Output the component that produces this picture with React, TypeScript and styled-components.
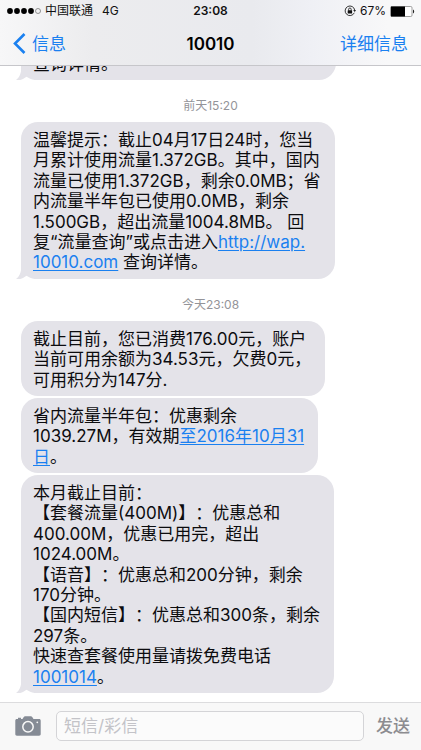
import React from "react";
import styled, { createGlobalStyle } from "styled-components";

const blue = "#1a80f0";
const bubbleGrey = "#e4e3e9";

const GlobalStyle = createGlobalStyle`
  * { box-sizing: border-box; }
  body {
    margin: 0;
    background: #fff;
    color: #0c0c0f;
    font-family: Inter, "Noto Sans CJK SC", sans-serif;
    text-spacing-trim: space-all;
  }
  button, input { font: inherit; }
`;

const Screen = styled.div`
  display: flex;
  flex-direction: column;
  height: 100vh;
  overflow: hidden;
`;

const TopBar = styled.header`
  flex: none;
  background: linear-gradient(90deg, #f7f7f8 0%, #ececee 22%, #e9eaee 60%, #eff0f5 74%, #f8f8f9 92%);
  border-bottom: 1px solid #c6c6ca;
`;

const StatusBar = styled.div`
  display: grid;
  grid-template-columns: 1fr auto 1fr;
  align-items: center;
  height: 22px;
  padding: 0 6px;
  font-size: 12px;
  line-height: 22px;
  color: #111;
`;

const StatusGroup = styled.div<{ $end?: boolean }>`
  display: flex;
  align-items: center;
  justify-content: ${(p) => (p.$end ? "flex-end" : "flex-start")};
  gap: ${(p) => (p.$end ? "4px" : "3px")};
`;

const Network = styled.span`
  margin-left: 6px;
`;

const Clock = styled.span`
  font-weight: 600;
  font-size: 12px;
`;

const NavBar = styled.nav`
  display: grid;
  grid-template-columns: 1fr auto 1fr;
  align-items: center;
  height: 43px;
  padding: 0 13px;
`;

const NavButton = styled.button<{ $end?: boolean }>`
  display: flex;
  align-items: center;
  gap: 6px;
  justify-self: ${(p) => (p.$end ? "end" : "start")};
  padding: 0;
  border: 0;
  background: none;
  color: ${blue};
  font-size: 17px;
  line-height: 24px;
`;

const Title = styled.h1`
  margin: 0;
  font-size: 17px;
  line-height: 24px;
  font-weight: 600;
  color: #000;
`;

const Thread = styled.main`
  flex: 1;
  min-height: 0;
  display: flex;
  flex-direction: column;
  justify-content: flex-end;
  align-items: flex-start;
  gap: 2px;
  padding: 0 21px 9px;
  overflow: hidden;
`;

const Stamp = styled.time`
  flex: none;
  align-self: center;
  padding: 14px 0 4px;
  font-size: 12px;
  line-height: 20px;
  color: #949499;
`;

const Bubble = styled.article<{ $tail?: boolean; $wide?: boolean }>`
  position: relative;
  flex: none;
  min-width: ${(p) => (p.$wide ? "83%" : "0")};
  max-width: 100%;
  padding: 8px 14px 6px 12px;
  border-radius: ${(p) => (p.$tail ? "17px 17px 17px 0" : "17px")};
  background: ${bubbleGrey};
  font-size: 17px;
  line-height: 1.2;
`;

const Line = styled.div`
  white-space: nowrap;
`;

const TailShape = styled.svg`
  position: absolute;
  left: -5px;
  bottom: 0;
`;

const TextLink = styled.a`
  color: ${blue};
  text-decoration: underline;
  text-decoration-thickness: 1px;
  text-underline-offset: 2px;
`;

const Composer = styled.form`
  flex: none;
  display: flex;
  align-items: center;
  gap: 12px;
  padding: 8px 11px 9px 15px;
  border-top: 1px solid #dcdcde;
  background: #f8f8f8;
`;

const IconButton = styled.button`
  display: flex;
  padding: 0;
  border: 0;
  background: none;
  margin-right: 3px;
`;

const MessageField = styled.input`
  flex: 1;
  min-width: 0;
  height: 30px;
  padding: 0 7px;
  border: 1px solid #d4d4d7;
  border-radius: 5px;
  background: #fbfbfb;
  font-size: 17px;
  &::placeholder { color: #c3c3c8; opacity: 1; }
`;

const SendButton = styled.button`
  padding: 0;
  border: 0;
  background: none;
  color: #8c8c90;
  font-size: 17px;
  font-weight: 500;
  line-height: 24px;
`;

const Tail = () => (
  <TailShape width="26" height="20" viewBox="0 0 26 20" aria-hidden="true">
    <path d="M5.500 4C5.500 12 4.500 16.500 0 20H5.500Z" fill={bubbleGrey} />
    <path d="M1 20.500C5 20.200 7.500 19 10.500 16.800C13.500 19 17 19.900 22 20.500Z" fill="#fff" />
  </TailShape>
);

type MessageProps = { lines: React.ReactNode[]; tail?: boolean; wide?: boolean };

const Message = ({ lines, tail, wide }: MessageProps) => (
  <Bubble $tail={tail} $wide={wide}>
    {tail && <Tail />}
    {lines.map((line, i) => (
      <Line key={i}>{line}</Line>
    ))}
  </Bubble>
);

const Signal = () => (
  <svg width="36" height="8" viewBox="0 0 36 8" role="img" aria-label="信号">
    {[4, 11, 18, 25].map((x) => (
      <circle key={x} cx={x} cy="4" r="2.900" fill="#000" />
    ))}
    <circle cx="32" cy="4" r="2.500" fill="none" stroke="#777" strokeWidth="0.800" />
  </svg>
);

const RotationLock = () => (
  <svg width="12" height="12" viewBox="0 0 12 12" fill="none" aria-hidden="true">
    <path d="M10.300 7.800A4.800 4.800 0 1 1 10.700 5.200" stroke="#222" strokeWidth="0.900" />
    <path d="M9.200 5H12L10.700 7Z" fill="#222" />
    <rect x="3.700" y="5.300" width="4.400" height="3.300" rx="0.400" fill="#111" />
    <path d="M4.600 5.500V4.300A1.300 1.300 0 0 1 7.200 4.300V5.500" stroke="#111" strokeWidth="0.800" />
  </svg>
);

const Battery = () => (
  <svg width="25" height="11" viewBox="0 0 25 11" role="img" aria-label="电池">
    <rect x="0.500" y="0.500" width="21.500" height="10" rx="1.300" fill="#fff" stroke="#777" strokeWidth="0.700" />
    <path d="M1 .5H15V10.500H1Z" fill="#000" />
    <path d="M23 3.500C24.600 4 24.600 7 23 7.500Z" fill="#222" />
  </svg>
);

const Chevron = () => (
  <svg width="13" height="21" viewBox="0 0 13 21" fill="none" aria-hidden="true">
    <path d="M11.500 1L2 10.500L11.500 20" stroke={blue} strokeWidth="2.600" />
  </svg>
);

const Camera = () => (
  <svg width="26" height="20" viewBox="0 0 26 20" aria-hidden="true">
    <path
      d="M2 3H3V1.800H6V3H7.500L8.600 1.200C9 .5 9.500.3 10.200.3H15.800C16.500.3 17 .5 17.400 1.200L18.500 3H24C25.200 3 25.700 3.600 25.700 4.700V18C25.700 19.200 25.200 19.700 24 19.700H2C.8 19.700.3 19.200.3 18V4.700C.3 3.600.8 3 2 3Z"
      fill="#858b95"
    />
    <circle cx="13" cy="10.800" r="5.200" fill="none" stroke="#f8f8f8" strokeWidth="1.500" />
    <circle cx="22.300" cy="6.300" r="0.900" fill="#f8f8f8" />
  </svg>
);

export default function App() {
  return (
    <Screen>
      <GlobalStyle />
      <TopBar>
        <StatusBar>
          <StatusGroup>
            <Signal />
            <span>中国联通</span>
            <Network>4G</Network>
          </StatusGroup>
          <Clock>23:08</Clock>
          <StatusGroup $end>
            <RotationLock />
            <span>67%</span>
            <Battery />
          </StatusGroup>
        </StatusBar>
        <NavBar>
          <NavButton type="button">
            <Chevron />
            信息
          </NavButton>
          <Title>10010</Title>
          <NavButton type="button" $end>
            详细信息
          </NavButton>
        </NavBar>
      </TopBar>

      <Thread>
        <Message tail wide lines={["查询详情。"]} />
        <Stamp>前天15:20</Stamp>
        <Message
          tail
          lines={[
            "温馨提示：截止04月17日24时，您当",
            "月累计使用流量1.372GB。其中，国内",
            "流量已使用1.372GB，剩余0.0MB；省",
            "内流量半年包已使用0.0MB，剩余",
            "1.500GB，超出流量1004.8MB。 回",
            <>
              复“流量查询”或点击进入<TextLink href="http://wap.10010.com">http://wap.</TextLink>
            </>,
            <>
              <TextLink href="http://wap.10010.com">10010.com</TextLink> 查询详情。
            </>,
          ]}
        />
        <Stamp>今天23:08</Stamp>
        <Message
          lines={[
            "截止目前，您已消费176.00元，账户",
            "当前可用余额为34.53元，欠费0元，",
            "可用积分为147分.",
          ]}
        />
        <Message
          lines={[
            "省内流量半年包：优惠剩余",
            <>
              1039.27M，有效期<TextLink href="#date">至2016年10月31</TextLink>
            </>,
            <>
              <TextLink href="#date">日</TextLink>。
            </>,
          ]}
        />
        <Message
          tail
          lines={[
            "本月截止目前：",
            "【套餐流量(400M)】：优惠总和",
            "400.00M，优惠已用完，超出",
            "1024.00M。",
            "【语音】：优惠总和200分钟，剩余",
            "170分钟。",
            "【国内短信】：优惠总和300条，剩余",
            "297条。",
            "快速查套餐使用量请拨免费电话",
            <>
              <TextLink href="tel:1001014">1001014</TextLink>。
            </>,
          ]}
        />
      </Thread>

      <Composer onSubmit={(e) => e.preventDefault()}>
        <IconButton type="button" aria-label="相机">
          <Camera />
        </IconButton>
        <MessageField type="text" placeholder="短信/彩信" aria-label="短信/彩信" />
        <SendButton type="submit">发送</SendButton>
      </Composer>
    </Screen>
  );
}
